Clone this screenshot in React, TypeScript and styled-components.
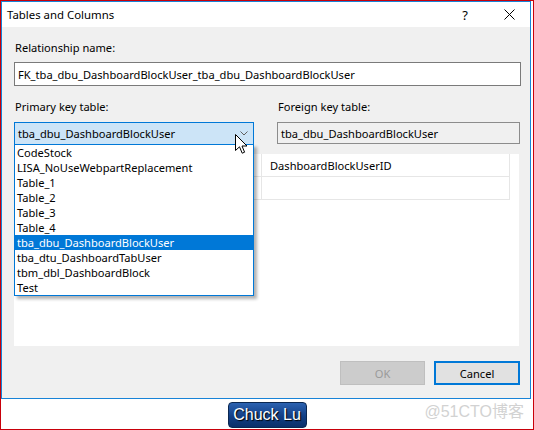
import React from 'react';
import styled, { createGlobalStyle } from 'styled-components';

const GlobalStyle = createGlobalStyle`
    html, body {
        margin: 0;
        padding: 0;
        background: #ffffff;
        overflow: hidden;
    }
    * {
        box-sizing: border-box;
    }
`;

const UI_FONT = `"Noto Sans", "Liberation Sans", sans-serif`;

const Frame = styled.div`
    position: relative;
    width: 534px;
    height: 430px;
    border: 1px solid #c8000a;
    background: #ffffff;
    display: flex;
    flex-direction: column;
    font-family: ${UI_FONT};
    font-size: 11.1px;
    color: #000000;
`;

const Window = styled.div`
    width: 530px;
    height: 398px;
    border: 1px solid #1883d7;
    display: flex;
    flex-direction: column;
`;

const TitleBar = styled.div`
    height: 25px;
    background: #ffffff;
    display: flex;
    align-items: center;
    padding-left: 5px;
`;

const Title = styled.div`
    flex: 1;
    font-size: 11.4px;
`;

const CaptionButton = styled.div<{ $w: number }>`
    width: ${p => p.$w}px;
    height: 25px;
    display: flex;
    align-items: center;
    justify-content: center;
    font-size: 13px;
`;

const Body = styled.div`
    flex: 1;
    background: #f0f0f0;
    padding: 13px 9px 13px 12px;
    display: flex;
    flex-direction: column;
`;

const Label = styled.div`
    height: 16px;
    line-height: 16px;
    padding-left: 1px;
`;

const TextBox = styled.div<{ $readOnly?: boolean }>`
    height: ${p => (p.$readOnly ? 22 : 24)}px;
    border: 1px solid ${p => (p.$readOnly ? '#8c8c8c' : '#7a7a7a')};
    background: ${p => (p.$readOnly ? '#f0f0f0' : '#ffffff')};
    display: flex;
    align-items: center;
    padding-left: 3px;
    white-space: nowrap;
    overflow: hidden;
`;

const Columns = styled.div`
    display: grid;
    grid-template-columns: 240px 243px;
    column-gap: 23px;
    margin-top: 13px;
`;

const Field = styled.div`
    position: relative;
    display: flex;
    flex-direction: column;
    gap: 7px;
`;

const Combo = styled.div`
    height: 23px;
    border: 1px solid #0078d7;
    background: #cce4f7;
    display: flex;
    align-items: center;
    padding-left: 3px;
`;

const ComboText = styled.div`
    flex: 1;
`;

const Chevron = styled.svg`
    width: 8px;
    height: 5px;
    margin-right: 5px;
`;

const DropList = styled.div`
    position: absolute;
    top: 45px;
    left: 0;
    width: 240px;
    border: 1px solid #0078d7;
    background: #ffffff;
    box-shadow: 3px 3px 3px rgba(0, 0, 0, 0.3);
    z-index: 2;
`;

const DropItem = styled.div<{ $selected?: boolean }>`
    height: 15px;
    line-height: 15px;
    padding-left: 2px;
    white-space: nowrap;
    background: ${p => (p.$selected ? '#0078d7' : 'transparent')};
    color: ${p => (p.$selected ? '#ffffff' : '#000000')};
`;

const Cursor = styled.svg`
    position: absolute;
    left: 221px;
    top: 35px;
    width: 13px;
    height: 20px;
    z-index: 3;
`;

const Grid = styled.div`
    flex: 1;
    margin-top: 9px;
    margin-right: 2px;
    background: #ffffff;
`;

const GridRow = styled.div`
    display: flex;
`;

const GridCell = styled.div`
    width: 248px;
    height: 23px;
    border-right: 1px solid #e6e6e6;
    border-bottom: 1px solid #e6e6e6;
    display: flex;
    align-items: center;
    padding-left: 8px;
`;

const ButtonRow = styled.div`
    display: flex;
    justify-content: flex-end;
    gap: 9px;
    margin-top: 15px;
    margin-right: 1px;
`;

const DialogButton = styled.div<{ $disabled?: boolean; $default?: boolean }>`
    width: ${p => (p.$default ? 86 : 85)}px;
    height: 24px;
    display: flex;
    align-items: center;
    justify-content: center;
    background: ${p => (p.$disabled ? '#cccccc' : '#e1e1e1')};
    border: ${p => (p.$default ? '2px solid #0078d7' : '1px solid #bfbfbf')};
    color: ${p => (p.$disabled ? '#9a9a9a' : '#000000')};
`;

const Footer = styled.div`
    flex: 1;
    display: flex;
    justify-content: center;
    padding-top: 3px;
`;

const Signature = styled.div`
    width: 79px;
    height: 26px;
    border: 1px solid #0b2750;
    border-radius: 4px;
    background: linear-gradient(#2c62b0, #123f86 55%, #0b3069);
    display: flex;
    align-items: center;
    justify-content: center;
    color: #ffffff;
    font-family: "Liberation Sans", Arial, sans-serif;
    font-size: 16px;
    text-shadow: 1px 1px 1px #000000;
`;

const Watermark = styled.div`
    position: absolute;
    right: 9px;
    bottom: 7px;
    color: #d2d2d2;
    font-family: "Liberation Sans", "Noto Sans CJK SC", sans-serif;
    font-size: 16px;
`;

const tables = [
    'CodeStock',
    'LISA_NoUseWebpartReplacement',
    'Table_1',
    'Table_2',
    'Table_3',
    'Table_4',
    'tba_dbu_DashboardBlockUser',
    'tba_dtu_DashboardTabUser',
    'tbm_dbl_DashboardBlock',
    'Test',
];

const selectedTable = 'tba_dbu_DashboardBlockUser';

const App: React.FC = () => {
    return (
        <>
            <GlobalStyle />
            <Frame>
                <Window>
                    <TitleBar>
                        <Title>Tables and Columns</Title>
                        <CaptionButton $w={46}>?</CaptionButton>
                        <CaptionButton $w={42}>
                            <svg width="11" height="11" viewBox="0 0 11 11">
                                <path d="M0.5 0.5 L10.5 10.5 M10.5 0.5 L0.5 10.5" stroke="#000" strokeWidth="1" />
                            </svg>
                        </CaptionButton>
                    </TitleBar>
                    <Body>
                        <Label>Relationship name:</Label>
                        <TextBox style={{ marginTop: 6 }}>FK_tba_dbu_DashboardBlockUser_tba_dbu_DashboardBlockUser</TextBox>
                        <Columns>
                            <Field>
                                <Label>Primary key table:</Label>
                                <Combo>
                                    <ComboText>{selectedTable}</ComboText>
                                    <Chevron viewBox="0 0 8 5">
                                        <path d="M0.5 0.5 L4 4 L7.5 0.5" fill="none" stroke="#606060" strokeWidth="1" />
                                    </Chevron>
                                </Combo>
                                <Cursor viewBox="0 0 13 20">
                                    <path
                                        d="M0.5 0.5 L0.5 16.5 L4.5 12.8 L7.2 19.2 L9.6 18.2 L7 12 L12 12 Z"
                                        fill="#ffffff"
                                        stroke="#000000"
                                        strokeWidth="1"
                                        strokeLinejoin="miter"
                                    />
                                </Cursor>
                                <DropList>
                                    {tables.map(t => (
                                        <DropItem key={t} $selected={t === selectedTable}>
                                            {t}
                                        </DropItem>
                                    ))}
                                </DropList>
                            </Field>
                            <Field>
                                <Label>Foreign key table:</Label>
                                <TextBox $readOnly>tba_dbu_DashboardBlockUser</TextBox>
                            </Field>
                        </Columns>
                        <Grid>
                            <GridRow>
                                <GridCell />
                                <GridCell>DashboardBlockUserID</GridCell>
                            </GridRow>
                            <GridRow>
                                <GridCell />
                                <GridCell />
                            </GridRow>
                        </Grid>
                        <ButtonRow>
                            <DialogButton $disabled>OK</DialogButton>
                            <DialogButton $default>Cancel</DialogButton>
                        </ButtonRow>
                    </Body>
                </Window>
                <Footer>
                    <Signature>Chuck Lu</Signature>
                </Footer>
                <Watermark>@51CTO博客</Watermark>
            </Frame>
        </>
    );
};

export default App;
